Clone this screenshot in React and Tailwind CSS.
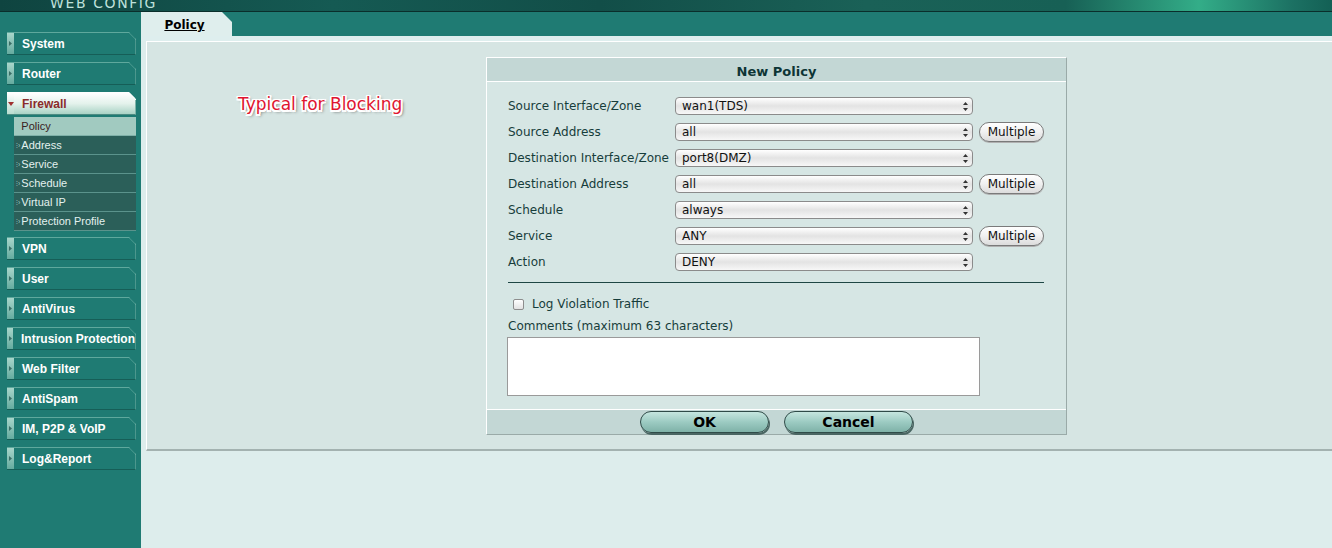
import React from "react";

const NAV = ["System", "Router", "Firewall", "VPN", "User", "AntiVirus", "Intrusion Protection", "Web Filter", "AntiSpam", "IM, P2P & VoIP", "Log&Report"];
const SUB = ["Policy", "Address", "Service", "Schedule", "Virtual IP", "Protection Profile"];

function NavItem({ label, open }) {
  return (
    <div
      className={`relative ml-[7px] flex h-[23px] w-[129px] items-stretch border-t border-r border-b [clip-path:polygon(0_0,calc(100%-7px)_0,100%_7px,100%_100%,0_100%)] ${
        open
          ? "mb-[2px] border-t-white border-r-[#7fb5aa] border-b-[#4d8c82] bg-gradient-to-b from-white via-[#e4f2ec] to-[#a9d3c5]"
          : "mb-[7px] border-t-[#5fa89d] border-r-[#4c978d] border-b-[#165e57] bg-[#1f7b73]"
      }`}
    >
      <div
        className={`flex w-[7px] items-center justify-center ${
          open ? "bg-gradient-to-b from-white to-[#b9dccf]" : "bg-gradient-to-b from-[#a8d6cb] to-[#64ab9f]"
        }`}
      >
        {open ? (
          <svg width="6" height="4" viewBox="0 0 6 4">
            <path d="M0 0 L6 0 L3 4 Z" fill="#a03030" />
          </svg>
        ) : (
          <svg width="3" height="5" viewBox="0 0 3 5">
            <path d="M0 0 L3 2.5 L0 5 Z" fill="#3b6e67" />
          </svg>
        )}
      </div>
      <span
        className={`flex items-center pl-[8px] font-['Liberation_Sans',Arial,sans-serif] text-[12px] font-bold whitespace-nowrap ${
          open ? "text-[#8a2b2b]" : "text-white"
        }`}
      >
        {label}
      </span>
      <svg className="absolute top-[-1px] right-[-1px]" width="8" height="8" viewBox="0 0 8 8">
        <path d="M0 0.5 L1 0.5 L7.5 7 L7.5 8" stroke={open ? "#ffffff" : "#5fa89d"} fill="none" />
      </svg>
    </div>
  );
}

function SubItem({ label, active }) {
  return (
    <div
      className={`ml-[14px] flex h-[19px] w-[122px] items-center border-b font-['Liberation_Sans',Arial,sans-serif] text-[11px] ${
        active ? "border-b-[#7fb0a8] bg-[#a1cac0] text-[#3a2020]" : "border-b-[#5b938c] bg-[#2b5f59] text-[#e3f1ef]"
      }`}
    >
      <span className="ml-[2px] mr-[1px] text-[7px] leading-none text-[#9fc9c2]">⁝›</span>
      {label}
    </div>
  );
}

function Sidebar() {
  return (
    <div className="flex w-[141px] shrink-0 flex-col bg-[#1f7b73] pt-[20px]">
      {NAV.map((n) =>
        n === "Firewall" ? (
          <React.Fragment key={n}>
            <NavItem label={n} open />
            <div className="mb-[6px]">
              {SUB.map((s) => (
                <SubItem key={s} label={s} active={s === "Policy"} />
              ))}
            </div>
          </React.Fragment>
        ) : (
          <NavItem key={n} label={n} />
        )
      )}
    </div>
  );
}

function Select({ value }) {
  return (
    <div className="flex h-[18px] w-[298px] items-center rounded-[4px] border border-[#8b8b8b] bg-gradient-to-b from-[#ffffff] via-[#e3e3e3] to-[#f7f7f7] text-[12px] text-[#111]">
      <span className="flex-1 pl-[6px] leading-none">{value}</span>
      <span className="flex h-full w-[13px] items-center justify-center">
        <svg width="5" height="9" viewBox="0 0 5 9">
          <path d="M2.5 0 L5 3 L0 3 Z M2.5 9 L5 6 L0 6 Z" fill="#333" />
        </svg>
      </span>
    </div>
  );
}

function Multiple() {
  return (
    <div className="ml-[6px] flex h-[20px] w-[65px] items-center justify-center rounded-full border border-[#7a7a7a] bg-gradient-to-b from-white via-[#f0f0f0] to-[#dcdcdc] text-[12px] text-[#111] shadow-[0_1px_0_#b0b0b0]">
      Multiple
    </div>
  );
}

const ROWS = [
  ["Source Interface/Zone", "wan1(TDS)", false],
  ["Source Address", "all", true],
  ["Destination Interface/Zone", "port8(DMZ)", false],
  ["Destination Address", "all", true],
  ["Schedule", "always", false],
  ["Service", "ANY", true],
  ["Action", "DENY", false],
];

function PillButton({ children }) {
  return (
    <div className="flex h-[22px] w-[129px] items-center justify-center rounded-full border border-[#2f4b48] bg-gradient-to-b from-[#c5e6df] via-[#9ccbc2] to-[#7fb2a8] pt-[1px] text-[14px] font-bold text-black shadow-[1px_2px_0_#4a6663]">
      {children}
    </div>
  );
}

function Dialog() {
  return (
    <div className="flex w-[581px] flex-col border-t border-l border-t-white border-l-white border-r border-b border-r-[#9aaaa8] border-b-[#9aaaa8] bg-[#d6e6e4] font-['DejaVu_Sans',Verdana,sans-serif]">
      <div className="flex h-[24px] items-center justify-center border-b border-b-white bg-[#c3d7d5] pt-[4px] text-[13px] font-bold text-[#0d3535]">
        New Policy
      </div>
      <div className="flex flex-col pt-[11px] pl-[21px]">
        {ROWS.map(([l, v, m]) => (
          <div key={l} className="flex h-[26px] items-center">
            <span className="w-[167px] text-[12px] whitespace-nowrap text-[#163d3b]">{l}</span>
            <Select value={v} />
            {m && <Multiple />}
          </div>
        ))}
        <div className="mt-[7px] h-px w-[536px] bg-[#1e4644]" />
        <div className="mt-[14px] flex h-[14px] items-center pl-[5px]">
          <div className="h-[11px] w-[11px] rounded-[2px] border border-[#8d8d8d] bg-gradient-to-b from-white to-[#e2e2e2]" />
          <span className="ml-[8px] text-[12px] text-[#163d3b]">Log Violation Traffic</span>
        </div>
        <div className="mt-[8px] text-[12px] leading-[14px] text-[#163d3b]">Comments (maximum 63 characters)</div>
        <div className="mt-[4px] -ml-[1px] h-[59px] w-[473px] border border-[#9a9a9a] bg-white" />
      </div>
      <div className="mt-[13px] flex h-[25px] items-center justify-center gap-[15px] border-t border-t-white bg-[#c3d7d5]">
        <PillButton>OK</PillButton>
        <PillButton>Cancel</PillButton>
      </div>
    </div>
  );
}

export default function App() {
  return (
    <div className="flex h-[548px] w-[1332px] flex-col overflow-hidden bg-[#1f7b73]">
      <div className="relative h-[12px] shrink-0 overflow-hidden border-b border-b-[#0a2e2b] bg-[linear-gradient(90deg,#0f4440_0%,#155a53_25%,#124e48_45%,#1a6157_65%,#176055_80%,#33ad88_90%,#1c7163_97%,#136055_100%)]">
        <div className="absolute top-[-5px] left-[50px] font-['DejaVu_Sans',Verdana,sans-serif] text-[14px] leading-[17px] tracking-[1.6px] text-[#bfe1dc]">
          WEB CONFIG
        </div>
      </div>
      <div className="flex flex-1">
        <Sidebar />
        <div className="flex flex-1 flex-col bg-[#ddedec]">
          <div className="flex h-[24px] shrink-0 bg-[#1f7b73]">
            <div className="flex w-[91px] items-center justify-center bg-[#dfeeed] pt-[2px] pr-[4px] [clip-path:polygon(0_0,calc(100%-10px)_0,100%_10px,100%_100%,0_100%)]">
              <span className="font-['DejaVu_Sans',Verdana,sans-serif] text-[12px] font-bold text-black underline">Policy</span>
            </div>
          </div>
          <div className="h-[5px] shrink-0 bg-[#deeeee]" />
          <div className="ml-[5px] flex h-[410px] shrink-0 items-start border-t border-l border-t-white border-l-white border-b-2 border-b-[#a3b2b0] bg-[#d6e5e3] pt-[15px]">
            <div className="w-[339px] shrink-0 pt-[35px] pl-[91px]">
              <span className="font-['DejaVu_Sans',Verdana,sans-serif] text-[17px] whitespace-nowrap text-[#e01530] [text-shadow:-1.5px_-1.5px_0_#fff,1.5px_-1.5px_0_#fff,-1.5px_1.5px_0_#fff,1.5px_1.5px_0_#fff,0_-1.5px_0_#fff,0_1.5px_0_#fff,-1.5px_0_0_#fff,1.5px_0_0_#fff,2px_2px_3px_#555]">
                Typical for Blocking
              </span>
            </div>
            <Dialog />
          </div>
        </div>
      </div>
    </div>
  );
}
